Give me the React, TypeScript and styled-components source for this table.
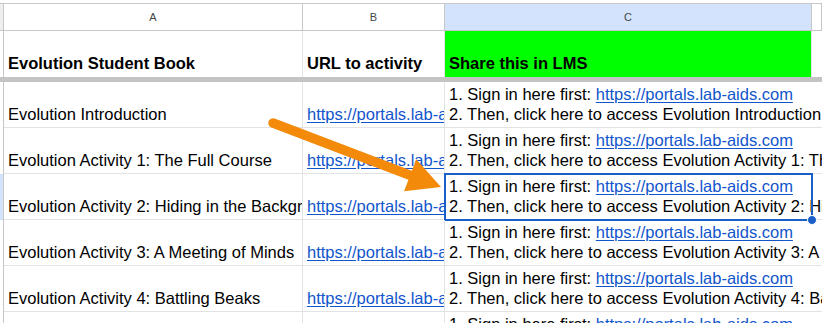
import React from "react";
import styled, { createGlobalStyle } from "styled-components";

const GRID = "#e2e3e3";
const HEAD_LINE = "#c7c7c7";
const LINK = "#1155cc";
const SEL = "#1a5fc8";
const COLS = "4px 299px 142px 367px 1fr";

const Global = createGlobalStyle`
  *, *::before, *::after { box-sizing: border-box; }
  html, body { margin: 0; padding: 0; background: #fff; overflow: hidden; }
  body { font-family: "Liberation Sans", Arial, sans-serif; }
`;

const Sheet = styled.div`
  position: relative;
  width: 822px;
  height: 323px;
  overflow: hidden;
  padding-top: 3px;
  background: #fff;
`;

const Row = styled.div<{ $h: number }>`
  display: grid;
  grid-template-columns: ${COLS};
  height: ${(p) => p.$h}px;
`;

const ColHeadRow = styled(Row)`
  border-top: 1px solid ${HEAD_LINE};
  border-bottom: 1px solid ${HEAD_LINE};
`;

const ColHead = styled.div<{ $active?: boolean }>`
  display: flex;
  align-items: center;
  justify-content: center;
  border-right: 1px solid ${HEAD_LINE};
  background: ${(p) => (p.$active ? "#d3e3fd" : "#fff")};
  color: #444746;
  font-size: 11px;
`;

const Corner = styled.div<{ $bg: string }>`
  background: ${(p) => p.$bg};
  border-right: 1px solid ${HEAD_LINE};
`;

const Frozen = styled.div`
  height: 5px;
  background: #c4c4c4;
`;

const Cell = styled.div<{ $bold?: boolean; $fill?: string; $span?: boolean; $noRight?: boolean; $bottom?: boolean }>`
  position: relative;
  display: flex;
  flex-direction: column;
  justify-content: flex-end;
  padding: 0 0 ${(p) => (p.$bold ? 4 : 3)}px 4px;
  font-size: 16.5px;
  line-height: 20px;
  font-weight: ${(p) => (p.$bold ? 700 : 400)};
  color: #000;
  white-space: nowrap;
  overflow: ${(p) => (p.$span ? "visible" : "hidden")};
  background: ${(p) => p.$fill || "transparent"};
  border-right: ${(p) => (p.$noRight ? "none" : `1px solid ${GRID}`)};
  border-bottom: ${(p) => (p.$bottom === false ? "none" : `1px solid ${GRID}`)};
  ${(p) => (p.$span ? "grid-column: 4 / 6;" : "")}
`;

const Link = styled.span`
  color: ${LINK};
  text-decoration: underline;
  text-underline-offset: 2px;
`;

const Line = styled.div``;

const Selection = styled.div`
  position: absolute;
  left: -1px;
  top: -1px;
  width: 369px;
  height: 48px;
  border: 2px solid ${SEL};
  pointer-events: none;
`;

const Handle = styled.div`
  position: absolute;
  right: -6px;
  bottom: -6px;
  width: 10px;
  height: 10px;
  border-radius: 50%;
  background: ${SEL};
  border: 1px solid #fff;
`;

const ArrowLayer = styled.svg`
  position: absolute;
  left: 0;
  top: 0;
  pointer-events: none;
`;

const activities = [
  "Evolution Introduction",
  "Evolution Activity 1: The Full Course",
  "Evolution Activity 2: Hiding in the Background",
  "Evolution Activity 3: A Meeting of Minds",
  "Evolution Activity 4: Battling Beaks",
  "Evolution Activity 5: Origins of Species",
];

const SELECTED = 2;

function Arrow() {
  const sx = 273, sy = 123, tx = 441, ty = 187;
  const dx = tx - sx, dy = ty - sy;
  const len = Math.hypot(dx, dy);
  const ux = dx / len, uy = dy / len;
  const bx = tx - 33 * ux, by = ty - 33 * uy;
  const px = -uy * 17, py = ux * 17;
  return (
    <ArrowLayer width={822} height={323} viewBox="0 0 822 323">
      <line x1={sx} y1={sy} x2={bx + ux * 2} y2={by + uy * 2} stroke="#f38a0a" strokeWidth={9.5} strokeLinecap="round" />
      <polygon points={`${tx},${ty} ${bx + px},${by + py} ${bx - px},${by - py}`} fill="#f38a0a" />
    </ArrowLayer>
  );
}

export default function App() {
  return (
    <>
      <Global />
      <Sheet>
        <ColHeadRow $h={28}>
          <Corner $bg="#efefef" />
          <ColHead>A</ColHead>
          <ColHead>B</ColHead>
          <ColHead $active>C</ColHead>
          <ColHead />
        </ColHeadRow>
        <Row $h={46}>
          <Corner $bg="#fff" />
          <Cell $bold $bottom={false}>Evolution Student Book</Cell>
          <Cell $bold $bottom={false}>URL to activity</Cell>
          <Cell $bold $bottom={false} $fill="#00ff00">Share this in LMS</Cell>
          <Cell $bottom={false} $noRight />
        </Row>
        <Frozen />
        {activities.map((a, i) => (
          <Row $h={46} key={a}>
            <Corner $bg={i === SELECTED ? "#d3e3fd" : "#fff"} />
            <Cell>{a}</Cell>
            <Cell>
              <Link>https://portals.lab-aids.com/activity</Link>
            </Cell>
            <Cell $span $noRight>
              <Line>
                1. Sign in here first: <Link>https://portals.lab-aids.com</Link>
              </Line>
              <Line>2. Then, click here to access {a}</Line>
              {i === SELECTED && (
                <Selection>
                  <Handle />
                </Selection>
              )}
            </Cell>
          </Row>
        ))}
        <Arrow />
      </Sheet>
    </>
  );
}
